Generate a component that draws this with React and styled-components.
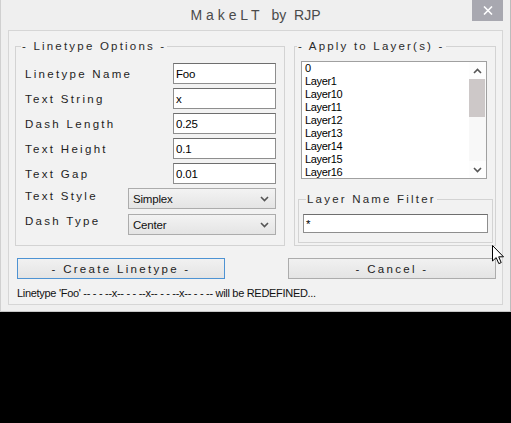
import React from 'react';
import styled, { createGlobalStyle } from 'styled-components';

const Global = createGlobalStyle`
  html, body { margin: 0; padding: 0; background: #000; }
  body {
    width: 511px; height: 423px; overflow: hidden;
    font-family: "Liberation Sans", Arial, sans-serif;
  }
`;

const Window = styled.div`
  position: relative;
  box-sizing: border-box;
  width: 511px;
  height: 312px;
  background: #efefef;
  border-left: 1px solid #d0d0d0;
  border-right: 1px solid #bcbcbc;
  border-bottom: 1px solid #c6c6c6;
  display: flex;
  flex-direction: column;
`;

const TitleBar = styled.div`
  position: relative;
  height: 30px;
  display: flex;
  align-items: center;
  justify-content: center;
  font-size: 14px;
  color: #4a4a4a;
  white-space: pre;
`;

const Spaced = styled.span`
  letter-spacing: 3.9px;
  margin-right: 8px;
`;

const CloseButton = styled.div`
  position: absolute;
  top: 0;
  right: 7px;
  width: 31px;
  height: 21px;
  background: #a8a8b0;
  display: flex;
  align-items: center;
  justify-content: center;
`;

const Panel = styled.div`
  flex: 1;
  margin: 0 7px 6px 7px;
  border: 1px solid #d6d6d6;
  background: #f2f2f2;
  padding: 8px 6px 0 6px;
  display: flex;
  flex-direction: column;
`;

const GroupsRow = styled.div`
  display: flex;
  gap: 9px;
  align-items: stretch;
`;

const Group = styled.fieldset`
  margin: 0;
  padding: 0;
  box-sizing: border-box;
  border: 1px solid #d3d3d3;
  min-width: 0;
`;

const OptionsGroup = styled(Group)`
  width: 270px;
`;

const LayersGroup = styled(Group)`
  width: 202px;
`;

const FilterGroup = styled(Group)`
  width: 100%;
`;

const Legend = styled.legend`
  padding: 0 1px;
  margin-left: ${p => p.$offset}px;
  font-size: 11.5px;
  line-height: 14px;
  letter-spacing: 2.2px;
  color: #2a2a2a;
`;

const OptionsBody = styled.div`
  padding: 10px 8px 10px 9px;
  display: flex;
  flex-direction: column;
`;

const Row = styled.div`
  display: flex;
  align-items: center;
  justify-content: space-between;
  height: 21px;
  margin-bottom: ${p => p.$gap}px;
`;

const Label = styled.span`
  font-size: 11.5px;
  letter-spacing: 2.3px;
  color: #1e1e1e;
  padding-bottom: ${p => p.$lift || 0}px;
`;

const TextBox = styled.div`
  box-sizing: border-box;
  width: ${p => p.$w}px;
  height: ${p => p.$h || 21}px;
  background: #fff;
  border: 1px solid #8e8e8e;
  border-top-color: #6e6e6e;
  padding: 0 2px;
  font-size: 11.5px;
  letter-spacing: -0.2px;
  color: #000;
  display: flex;
  align-items: center;
`;

const SelectBox = styled.div`
  box-sizing: border-box;
  width: 148px;
  height: 21px;
  border: 1px solid #acacac;
  background: linear-gradient(#f3f3f3, #e4e4e4);
  padding: 0 6px 0 4px;
  font-size: 11.5px;
  letter-spacing: -0.2px;
  color: #111;
  display: flex;
  align-items: center;
  justify-content: space-between;
`;

const LayersBody = styled.div`
  padding: 8px 2px 2px 3px;
  display: flex;
  flex-direction: column;
`;

const ListBox = styled.div`
  box-sizing: border-box;
  margin-left: 3px;
  width: 186px;
  height: 118px;
  border: 1px solid #a0a0a0;
  background: #fff;
  display: flex;
  margin-bottom: 13px;
`;

const ListItems = styled.div`
  flex: 1;
  padding: 0 0 0 3px;
  overflow: hidden;
`;

const ListItem = styled.div`
  font-size: 11px;
  line-height: 13px;
  letter-spacing: -0.35px;
  color: #000;
`;

const ScrollBar = styled.div`
  width: 17px;
  display: flex;
  flex-direction: column;
  background: #f8f8f8;
`;

const ScrollButton = styled.div`
  height: 17px;
  display: flex;
  align-items: center;
  justify-content: center;
  background: #fdfdfd;
`;

const ScrollThumb = styled.div`
  height: 38px;
  margin: 0 1px 0 0;
  background: #cdc8c8;
`;

const ScrollTrack = styled.div`
  flex: 1;
`;

const FilterBody = styled.div`
  padding: 8px 5px 9px 4px;
`;

const ButtonRow = styled.div`
  display: flex;
  justify-content: space-between;
  margin-top: 12px;
  padding: 0 0 0 2px;
`;

const Button = styled.div`
  box-sizing: border-box;
  width: 208px;
  height: 21px;
  border: 1px solid ${p => (p.$focused ? '#4e93d3' : '#acacac')};
  background: linear-gradient(#f1f1f1, #e4e4e4);
  display: flex;
  align-items: center;
  justify-content: center;
  font-size: 11.5px;
  letter-spacing: 2.3px;
  color: #222;
`;

const Status = styled.div`
  margin-top: 7px;
  padding-left: 2px;
  font-size: 11px;
  line-height: 14px;
  letter-spacing: -0.3px;
  color: #111;
  white-space: pre;
`;

const Cursor = styled.svg`
  position: absolute;
  left: 491px;
  top: 245px;
`;

const Chevron = ({ up }) => (
  <svg width="9" height="6" viewBox="0 0 9 6">
    <path
      d={up ? 'M1 5 L4.5 1.5 L8 5' : 'M1 1 L4.5 4.5 L8 1'}
      fill="none"
      stroke="#555"
      strokeWidth="1.6"
    />
  </svg>
);

const layers = ['0', 'Layer1', 'Layer10', 'Layer11', 'Layer12', 'Layer13', 'Layer14', 'Layer15', 'Layer16'];

const fields = [
  ['Linetype Name', 'Foo'],
  ['Text String', 'x'],
  ['Dash Length', '0.25'],
  ['Text Height', '0.1'],
  ['Text Gap', '0.01'],
];

export default function App() {
  return (
    <>
      <Global />
      <Window>
        <TitleBar>
          <Spaced>MakeLT</Spaced>
          {'by  RJP'}
          <CloseButton>
            <svg width="10" height="9" viewBox="0 0 10 9">
              <path d="M1 0.5 L9 8.5 M9 0.5 L1 8.5" stroke="#fff" strokeWidth="1.6" />
            </svg>
          </CloseButton>
        </TitleBar>
        <Panel>
          <GroupsRow>
            <OptionsGroup>
              <Legend $offset={5}>- Linetype Options -</Legend>
              <OptionsBody>
                {fields.map(([label, value]) => (
                  <Row key={label} $gap={4}>
                    <Label>{label}</Label>
                    <TextBox $w={103}>{value}</TextBox>
                  </Row>
                ))}
                <Row $gap={5}>
                  <Label $lift={5}>Text Style</Label>
                  <SelectBox>
                    Simplex
                    <Chevron />
                  </SelectBox>
                </Row>
                <Row $gap={0}>
                  <Label $lift={7}>Dash Type</Label>
                  <SelectBox>
                    Center
                    <Chevron />
                  </SelectBox>
                </Row>
              </OptionsBody>
            </OptionsGroup>
            <LayersGroup>
              <Legend $offset={2}>- Apply to Layer(s) -</Legend>
              <LayersBody>
                <ListBox>
                  <ListItems>
                    {layers.map(l => (
                      <ListItem key={l}>{l}</ListItem>
                    ))}
                  </ListItems>
                  <ScrollBar>
                    <ScrollButton>
                      <Chevron up />
                    </ScrollButton>
                    <ScrollThumb />
                    <ScrollTrack />
                    <ScrollButton>
                      <Chevron />
                    </ScrollButton>
                  </ScrollBar>
                </ListBox>
                <FilterGroup>
                  <Legend $offset={7}>Layer Name Filter</Legend>
                  <FilterBody>
                    <TextBox $w={185} $h={19}>*</TextBox>
                  </FilterBody>
                </FilterGroup>
              </LayersBody>
            </LayersGroup>
          </GroupsRow>
          <ButtonRow>
            <Button $focused>- Create Linetype -</Button>
            <Button>- Cancel -</Button>
          </ButtonRow>
          <Status>
            {"Linetype 'Foo' -- - - --x-- - - --x-- - - --x-- - - -- will be REDEFINED..."}
          </Status>
        </Panel>
        <Cursor width="13" height="20" viewBox="0 0 13 20">
          <path
            d="M0.5 0.5 L0.5 16 L4.2 12.6 L6.8 18.6 L9.2 17.6 L6.7 11.8 L11.5 11.8 Z"
            fill="#fff"
            stroke="#000"
            strokeWidth="1"
            strokeLinejoin="round"
          />
        </Cursor>
      </Window>
    </>
  );
}
